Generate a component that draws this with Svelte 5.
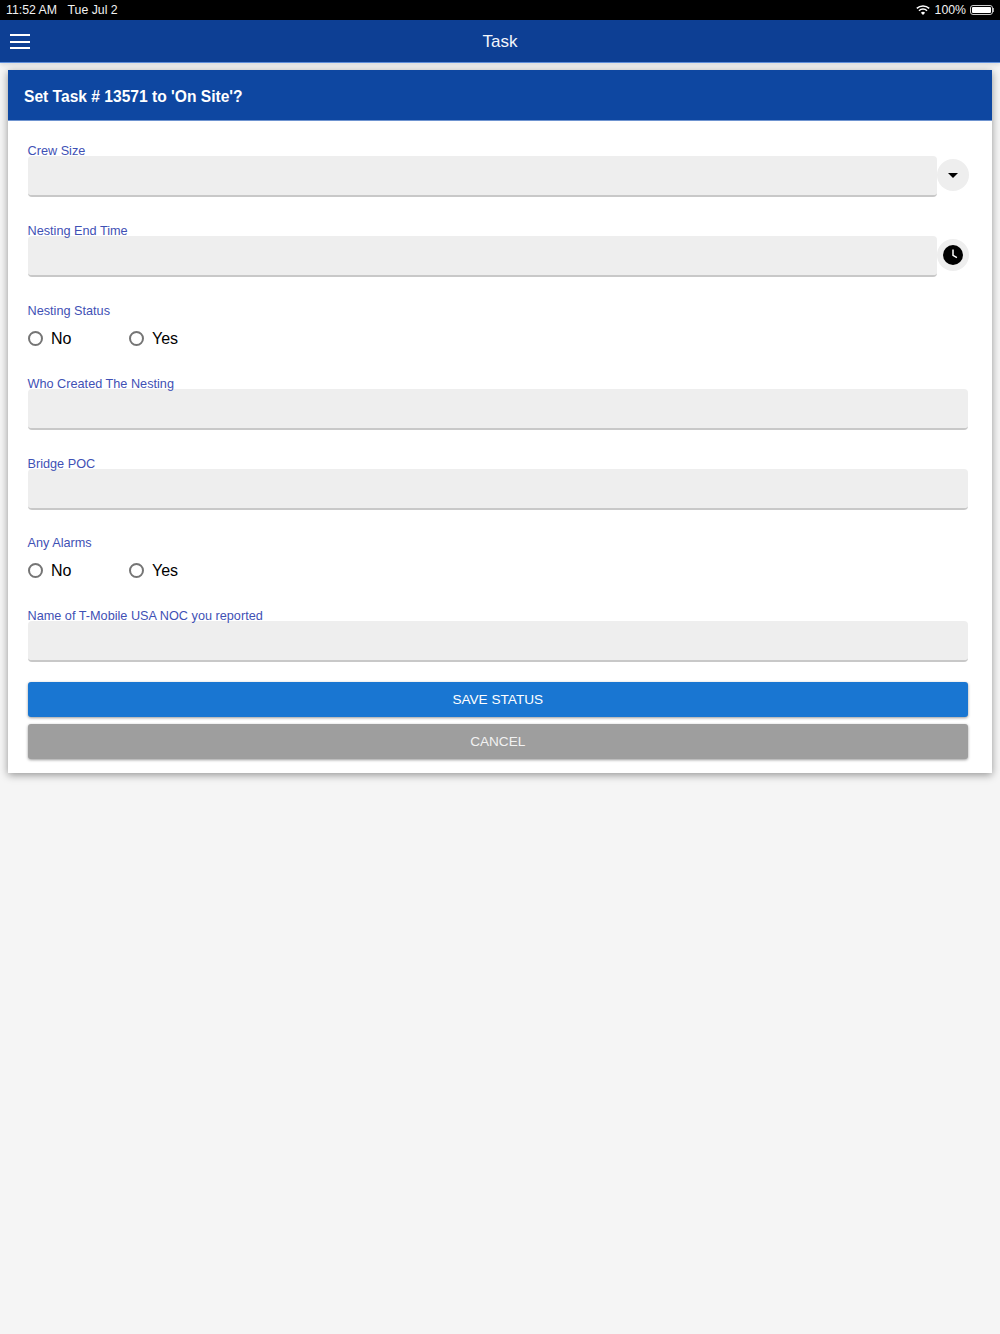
{#snippet field(label)}
	<div class="field">
		<span class="label">{label}</span>
		<div class="input"></div>
	</div>
{/snippet}

{#snippet radios(label, tight = false)}
	<div class="radio-group" class:tight>
		<span class="label">{label}</span>
		<div class="radio-row">
			<div class="radio-item"><span class="radio"></span>No</div>
			<div class="radio-item"><span class="radio"></span>Yes</div>
		</div>
	</div>
{/snippet}

<div class="status-bar">
	<div class="time"><span>11:52 AM</span><span>Tue Jul 2</span></div>
	<div class="status-right">
		<svg width="14" height="10" viewBox="0 0 14 10" fill="none" stroke="#fff" stroke-width="1.5">
			<path d="M.8 3.4a9 9 0 0 1 12.4 0" />
			<path d="M3 5.7a5.8 5.8 0 0 1 8 0" />
			<path d="M7 10 4.9 7.8a3 3 0 0 1 4.2 0z" fill="#fff" stroke="none" />
		</svg>
		<span>100%</span>
		<div class="battery"><div class="battery-fill"></div></div>
		<div class="battery-cap"></div>
	</div>
</div>

<header class="nav">
	<button class="menu" aria-label="Menu"><span></span><span></span><span></span></button>
	<div class="title">Task</div>
</header>

<main class="page">
	<section class="card">
		<div class="card-head">Set Task # 13571 to 'On Site'?</div>
		<div class="card-body">
			<div class="with-action">
				{@render field('Crew Size')}
				<div class="action">
					<svg width="10" height="5" viewBox="0 0 10 5"><path d="M0 0h10L5 5z" fill="#000" /></svg>
				</div>
			</div>
			<div class="with-action">
				{@render field('Nesting End Time')}
				<div class="action">
					<svg width="20" height="20" viewBox="0 0 20 20">
						<circle cx="10" cy="10" r="10" fill="#000" />
						<path d="M10 4.5V10.4l3.9 2.3" fill="none" stroke="#fff" stroke-width="1.5" />
					</svg>
				</div>
			</div>
			{@render radios('Nesting Status')}
			{@render field('Who Created The Nesting')}
			{@render field('Bridge POC')}
			{@render radios('Any Alarms', true)}
			{@render field('Name of T-Mobile USA NOC you reported')}
			<button class="btn save">SAVE STATUS</button>
			<button class="btn cancel">CANCEL</button>
		</div>
	</section>
</main>

<style>
	:global(body) {
		margin: 0;
		background: #f5f5f5;
		font-family: 'Liberation Sans', Arial, sans-serif;
	}

	.status-bar {
		height: 20px;
		background: #000;
		color: #f2f2f2;
		font-size: 12.3px;
		line-height: 19px;
		display: flex;
		align-items: center;
		justify-content: space-between;
		padding: 0 6px;
	}

	.time {
		display: flex;
		gap: 10.5px;
	}

	.status-right {
		display: flex;
		align-items: center;
		gap: 4.5px;
	}

	.battery {
		width: 23px;
		height: 10px;
		box-sizing: border-box;
		border: 1px solid #ccc;
		border-radius: 3px;
		padding: 1px;
		margin-left: -1px;
	}

	.battery-fill {
		height: 100%;
		background: #fff;
		border-radius: 1px;
	}

	.battery-cap {
		width: 1px;
		height: 4px;
		background: #aaa;
		margin-left: -4px;
	}

	.nav {
		height: 42px;
		background: #0d3f94;
		border-bottom: 1px solid #5f8fdc;
		box-shadow: 0 2px 4px rgba(0, 0, 0, 0.1);
		position: relative;
		display: flex;
		align-items: center;
		justify-content: center;
	}

	.menu {
		position: absolute;
		left: 10px;
		top: 14px;
		width: 20px;
		padding: 0;
		border: 0;
		background: none;
		display: flex;
		flex-direction: column;
		gap: 4.5px;
	}

	.menu span {
		height: 2px;
		background: #fff;
	}

	.title {
		color: #f3f6fb;
		font-size: 17px;
		padding-top: 2px;
	}

	.page {
		box-sizing: border-box;
		min-height: calc(100vh - 63px);
		padding: 7px 8px 0;
	}

	.card {
		background: #fff;
		box-shadow: 0 2px 8px rgba(0, 0, 0, 0.4);
	}

	.card-head {
		height: 51px;
		box-sizing: border-box;
		background: #0e47a1;
		border-bottom: 1px solid #6f94d0;
		color: #fff;
		font-size: 15.6px;
		font-weight: bold;
		line-height: 53px;
		padding-left: 16px;
	}

	.card-body {
		padding: 22px 24px 14px 19.5px;
		display: flex;
		flex-direction: column;
	}

	.with-action {
		display: flex;
		align-items: flex-end;
	}

	.with-action .field {
		flex: 1;
	}

	.action {
		width: 32px;
		height: 32px;
		flex: none;
		margin: 0 -1px 32px 0;
		border-radius: 50%;
		background: #eeeeee;
		display: flex;
		align-items: center;
		justify-content: center;
		position: relative;
	}

	.field {
		padding-bottom: 26.5px;
	}

	.label {
		display: block;
		position: relative;
		z-index: 1;
		height: 13px;
		line-height: 16px;
		color: #3f51b5;
		font-size: 12.7px;
		white-space: nowrap;
	}

	.input {
		height: 38.5px;
		background: #eeeeee;
		border-radius: 4px;
		border-bottom: 2px solid #c8c8c8;
	}

	.radio-group {
		height: 73px;
	}

	.radio-group.tight {
		margin-top: -1px;
	}

	.radio-row {
		display: flex;
		margin-top: 13px;
		height: 20px;
	}

	.radio-item {
		width: 101px;
		display: flex;
		align-items: center;
		gap: 8px;
		font-size: 16px;
		color: #000;
	}

	.radio {
		border: 2px solid #757575;
		border-radius: 50%;
		width: 11.5px;
		height: 11.5px;
		margin-top: -1px;
	}

	.btn {
		height: 35px;
		border: 0;
		border-radius: 3px;
		color: #fff;
		font-family: inherit;
		font-size: 13.6px;
		padding: 0;
		box-shadow: 0 1px 3px rgba(0, 0, 0, 0.4);
	}

	.save {
		margin-top: -6.5px;
		background: #1976d2;
	}

	.cancel {
		margin-top: 7px;
		background: #9e9e9e;
		color: #f2f2f2;
	}
</style>
